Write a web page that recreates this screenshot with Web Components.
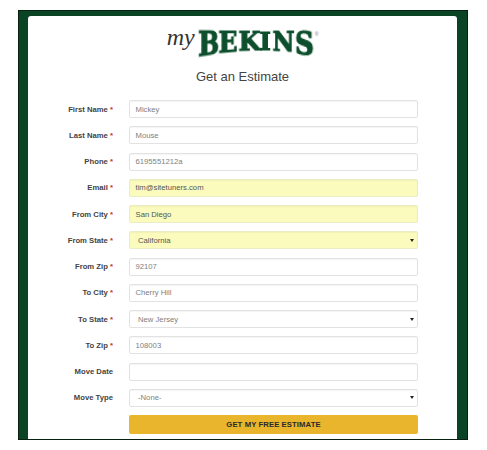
<!DOCTYPE html>
<html>
<head>
<meta charset="utf-8">
<title>Get an Estimate</title>
<style>
html, body { margin: 0; background: #fff; }
body { height: 450px; overflow: hidden; font-family: "Liberation Sans", Arial, sans-serif; }
</style>
</head>
<body>
<estimate-page>
  <bekins-logo></bekins-logo>
  <h1 slot="title">Get an Estimate</h1>
  <form-row label="First Name" required value="Mickey"></form-row>
  <form-row label="Last Name" required value="Mouse"></form-row>
  <form-row label="Phone" required value="6195551212a"></form-row>
  <form-row label="Email" required value="tim@sitetuners.com" filled></form-row>
  <form-row label="From City" required value="San Diego" filled></form-row>
  <form-row label="From State" required value="California" filled select></form-row>
  <form-row label="From Zip" required value="92107"></form-row>
  <form-row label="To City" required value="Cherry Hill"></form-row>
  <form-row label="To State" required value="New Jersey" select></form-row>
  <form-row label="To Zip" required value="108003"></form-row>
  <form-row label="Move Date" value=""></form-row>
  <form-row label="Move Type" value="-None-" select></form-row>
  <submit-row>GET MY FREE ESTIMATE</submit-row>
</estimate-page>

<script>
class EstimatePage extends HTMLElement {
  constructor() {
    super();
    this.attachShadow({ mode: "open" });
    this.shadowRoot.innerHTML = `
<style>
:host{
    display: block;
    height: 430px;
    width: 450px;
    margin: 10px 0 0 18px;
    background: #0b4425;
    box-sizing: border-box;
    padding: 5px 10px 0 9px;
    border: 1px solid #07200f;
    overflow: hidden;
}
.card{
    height: 100%;
    background: #fff;
    border-radius: 3px 3px 0 0;
    padding-top: 14px;
    box-sizing: border-box;
    filter: blur(.45px);
}
.rows{
    display: flex;
    flex-direction: column;
    gap: 8.25px;
}
::slotted(h1){
    margin: 11px 0 13px;
    font-size: 13px;
    line-height: 20px;
    font-weight: normal;
    text-align: center;
    color: #444;
}
</style>
<div class="card">
    <slot name="logo"></slot>
    <slot name="title"></slot>
    <div class="rows"><slot></slot></div>
</div>`;
  }
}

class BekinsLogo extends HTMLElement {
  constructor() {
    super();
    this.slot = "logo";
    this.attachShadow({ mode: "open" });
    this.shadowRoot.innerHTML = `
<style>
:host{
    display: flex;
    justify-content: center;
    align-items: flex-start;
    height: 26px;
    color: #0d4f2c;
}
.my{
    font: italic 24px/14px "Liberation Serif", serif;
    color: #333;
    margin-right: 3px;
}
.word{
    display: flex;
    align-items: flex-start;
    height: 24px;
    margin-top: 1px;
    font: bold 27px/24px "DejaVu Serif", serif;
    -webkit-text-stroke: 1.1px #0d4f2c;
}
.word span{
    display: block;
    width: 20px;
    text-align: center;
    transform-origin: 50% 1px;
}
.reg{
    font: 5px/8px "Liberation Sans", sans-serif;
    color: #777;
    margin-left: 1px;
}
</style>
<span class="my">my</span>
<div class="word"><span style="transform:perspective(60px) rotateY(22deg) scale(1,1.14)">B</span><span style="transform:perspective(60px) rotateY(14deg) scale(.95,1)">E</span><span style="width:21px;transform:perspective(80px) rotateY(6deg) scale(.95,.92)">K</span><span style="width:12px;transform:scale(.9,.9)">I</span><span style="width:23px;transform:perspective(60px) rotateY(-10deg) scale(.9,.95)">N</span><span style="transform:perspective(60px) rotateY(-22deg) scale(1.05,1.14)">S</span></div>
<span class="reg">®</span>`;
  }
}

const rowStyle = `
:host{
    display: grid;
    grid-template-columns: 85px 289px;
    column-gap: 16px;
    align-items: center;
    height: 18px;
    font-size: 7.7px;
}
.label{
    text-align: right;
    font-weight: bold;
    color: #444;
    white-space: nowrap;
}`;

class FormRow extends HTMLElement {
  constructor() {
    super();
    this.attachShadow({ mode: "open" });
  }

  connectedCallback() {
    const label = this.getAttribute("label");
    const value = this.getAttribute("value");
    const star = this.hasAttribute("required") ? ` <b>*</b>` : "";
    const isSelect = this.hasAttribute("select");
    this.shadowRoot.innerHTML = `
<style>
${rowStyle}
b{
    color: #c0392b;
}
.field{
    display: flex;
    align-items: center;
    justify-content: space-between;
    height: 18px;
    box-sizing: border-box;
    border: 1px solid #e2e2e2;
    border-radius: 2px;
    padding: 0 3px 0 5.5px;
    background: #fff;
    color: #808080;
    box-shadow: inset 0 1px 1px rgba(0,0,0,.04);
}
:host([filled]) .field{
    background: #fbfbbd;
    border-color: #ebebc4;
    color: #555;
}
:host([select]) .field{
    padding-left: 8px;
}
.arrow{
    width: 0;
    height: 0;
    border: solid transparent;
    border-width: 3px 2px 0 2px;
    border-top-color: #222;
}
</style>
<div class="label">${label}${star}</div>
<div class="field"><span>${value}</span>${isSelect ? `<i class="arrow"></i>` : ""}</div>`;
  }
}

class SubmitRow extends HTMLElement {
  constructor() {
    super();
    this.attachShadow({ mode: "open" });
    this.shadowRoot.innerHTML = `
<style>
${rowStyle}
:host{
    height: 18.5px;
}
.btn{
    grid-column: 2;
    display: flex;
    align-items: center;
    justify-content: center;
    height: 18.5px;
    background: #e9b52c;
    border-radius: 2px;
    color: #2a2a2a;
    font-weight: bold;
    letter-spacing: .1px;
}
</style>
<div class="btn"><slot></slot></div>`;
  }
}

customElements.define("estimate-page", EstimatePage);
customElements.define("bekins-logo", BekinsLogo);
customElements.define("form-row", FormRow);
customElements.define("submit-row", SubmitRow);
</script>
</body>
</html>
